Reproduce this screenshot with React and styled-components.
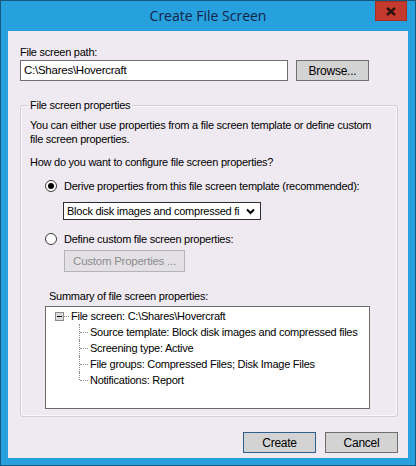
import styled, { createGlobalStyle } from 'styled-components';

const GlobalStyle = createGlobalStyle`
  html, body {
    margin: 0;
    padding: 0;
    background: #27a0de;
  }
  body {
    font-family: "Liberation Sans", Arial, sans-serif;
    font-size: 11px;
    letter-spacing: -0.25px;
    color: #000;
  }
`;

const Window = styled.div`
  width: 416px;
  height: 466px;
  box-sizing: border-box;
  border: 1px solid #17587f;
  background: #27a0de;
  padding: 0 7px 7px;
  display: flex;
  flex-direction: column;
`;

const TitleBar = styled.div`
  height: 30px;
  flex: none;
  display: grid;
  grid-template-columns: 1fr auto 1fr;
  align-items: start;
`;

const Title = styled.div`
  grid-column: 2;
  font-family: "Open Sans", "Noto Sans", sans-serif;
  font-size: 14px;
  letter-spacing: 0;
  line-height: 30px;
  color: #112348;
`;

const CloseButton = styled.div`
  grid-column: 3;
  justify-self: end;
  margin-right: 1px;
  width: 32px;
  height: 20px;
  background: #c43a2c;
  box-shadow: inset 0 0 0 1px #a82c22;
  display: flex;
  align-items: center;
  justify-content: center;
`;

const Panel = styled.div`
  flex: 1;
  background: #efe9f1;
  padding: 14px 10px 0 12px;
  display: flex;
  flex-direction: column;
`;

const Label = styled.div`
  line-height: 14px;
  margin-left: ${(p) => p.$indent || 0}px;
  margin-top: ${(p) => p.$top || 0}px;
`;

const PathRow = styled.div`
  display: flex;
  align-items: center;
  gap: 8px;
  margin-top: 1px;
`;

const TextBox = styled.div`
  width: 268px;
  height: 21px;
  box-sizing: border-box;
  background: #fff;
  border: 1px solid #6e6e6e;
  padding-left: 3px;
  line-height: 19px;
  font-size: 11.5px;
`;

const Button = styled.div`
  width: 73px;
  height: 21px;
  box-sizing: border-box;
  background: #d3d3d3;
  border: 1px solid ${(p) => (p.$default ? '#2f5f8c' : '#6f6f6f')};
  display: flex;
  align-items: center;
  justify-content: center;
  font-size: 12px;
`;

const Group = styled.fieldset`
  margin: 17px 0 0;
  padding: 6px 9px 7px;
  border: 1px solid #d2ccd6;
  border-radius: 3px;
  box-shadow: inset 0 0 0 1px #faf8fb;
`;

const Legend = styled.legend`
  padding: 0 2px;
  margin-left: -2px;
  line-height: 14px;
`;

const Text = styled.p`
  margin: 0;
  max-width: 346px;
  line-height: 14px;
  margin-top: ${(p) => p.$top || 0}px;
`;

const RadioRow = styled.label`
  display: flex;
  align-items: center;
  gap: 7px;
  height: 14px;
  margin-left: 15px;
  margin-top: ${(p) => p.$top}px;
`;

const RadioCircle = styled.span`
  flex: none;
  width: 12px;
  height: 12px;
  box-sizing: border-box;
  border-radius: 50%;
  border: 1px solid #3a3a3a;
  background: #fff;
  display: flex;
  align-items: center;
  justify-content: center;
  &::after {
    content: '';
    width: 6px;
    height: 6px;
    border-radius: 50%;
    background: ${(p) => (p.$checked ? '#000' : 'transparent')};
  }
`;

const Select = styled.div`
  width: 198px;
  height: 18px;
  box-sizing: border-box;
  margin: 9px 0 0 33px;
  background: #fff;
  border: 1px solid #2e2e2e;
  display: flex;
  align-items: center;
  gap: 3px;
  padding: 0 5px 0 3px;
  font-size: 11px;
  span {
    flex: 1;
    white-space: nowrap;
    overflow: hidden;
  }
  svg {
    flex: none;
  }
`;

const DisabledButton = styled.div`
  width: 121px;
  height: 22px;
  box-sizing: border-box;
  margin: 4px 0 0 34px;
  background: #e4e1e6;
  border: 1px solid #b4b4b4;
  color: #8c8c8c;
  display: flex;
  align-items: center;
  justify-content: center;
  font-size: 11.5px;
`;

const Tree = styled.div`
  width: 325px;
  height: 103px;
  box-sizing: border-box;
  margin: 3px 0 0 15px;
  background: #fff;
  border: 1px solid #6c6c6c;
  padding-top: 1px;
  font-size: 11px;
  overflow: hidden;
`;

const TreeRow = styled.div`
  height: 16px;
  display: flex;
  align-items: center;
  padding-left: ${(p) => p.$indent}px;
  white-space: nowrap;
`;

const Expander = styled.span`
  flex: none;
  width: 9px;
  height: 9px;
  box-sizing: border-box;
  border: 1px solid #8a8a8a;
  background: #dcdcdc;
  display: flex;
  align-items: center;
  justify-content: center;
  &::after {
    content: '';
    width: 5px;
    height: 1px;
    background: #000;
  }
`;

const Dots = styled.span`
  flex: none;
  width: ${(p) => p.$w}px;
  height: 0;
  border-top: 1px dotted #8f8f8f;
  margin-right: 2px;
`;

const Connector = styled.span`
  flex: none;
  position: relative;
  width: 9px;
  height: 16px;
  margin-right: 2px;
  &::before {
    content: '';
    position: absolute;
    left: 0;
    top: 0;
    height: ${(p) => (p.$last ? '8px' : '16px')};
    border-left: 1px dotted #8f8f8f;
  }
  &::after {
    content: '';
    position: absolute;
    left: 1px;
    right: 0;
    top: 8px;
    border-top: 1px dotted #8f8f8f;
  }
`;

const Footer = styled.div`
  display: flex;
  justify-content: flex-end;
  gap: 9px;
  margin-top: 15px;
`;

const summary = [
  'Source template: Block disk images and compressed files',
  'Screening type: Active',
  'File groups: Compressed Files; Disk Image Files',
  'Notifications: Report',
];

export default function App() {
  return (
    <>
      <GlobalStyle />
      <Window>
        <TitleBar>
          <Title>Create File Screen</Title>
          <CloseButton>
            <svg width="10" height="9" viewBox="0 0 10 9">
              <path d="M1 1 L9 8 M9 1 L1 8" stroke="#2a1210" strokeWidth="2.4" />
            </svg>
          </CloseButton>
        </TitleBar>
        <Panel>
          <Label>File screen path:</Label>
          <PathRow>
            <TextBox>C:\Shares\Hovercraft</TextBox>
            <Button>Browse...</Button>
          </PathRow>
          <Group>
            <Legend>File screen properties</Legend>
            <Text>
              You can either use properties from a file screen template or define custom file
              screen properties.
            </Text>
            <Text $top={9}>How do you want to configure file screen properties?</Text>
            <RadioRow $top={10}>
              <RadioCircle $checked />
              Derive properties from this file screen template (recommended):
            </RadioRow>
            <Select>
              <span>Block disk images and compressed fi</span>
              <svg width="9" height="7" viewBox="0 0 9 7">
                <path d="M1 1.5 L4.5 5 L8 1.5" fill="none" stroke="#000" strokeWidth="2" />
              </svg>
            </Select>
            <RadioRow $top={12}>
              <RadioCircle />
              Define custom file screen properties:
            </RadioRow>
            <DisabledButton>Custom Properties ...</DisabledButton>
            <Label $indent={19} $top={17}>
              Summary of file screen properties:
            </Label>
            <Tree>
              <TreeRow $indent={9}>
                <Expander />
                <Dots $w={5} />
                File screen: C:\Shares\Hovercraft
              </TreeRow>
              {summary.map((item, i) => (
                <TreeRow key={item} $indent={33}>
                  <Connector $last={i === summary.length - 1} />
                  {item}
                </TreeRow>
              ))}
            </Tree>
          </Group>
          <Footer>
            <Button $default>Create</Button>
            <Button>Cancel</Button>
          </Footer>
        </Panel>
      </Window>
    </>
  );
}
